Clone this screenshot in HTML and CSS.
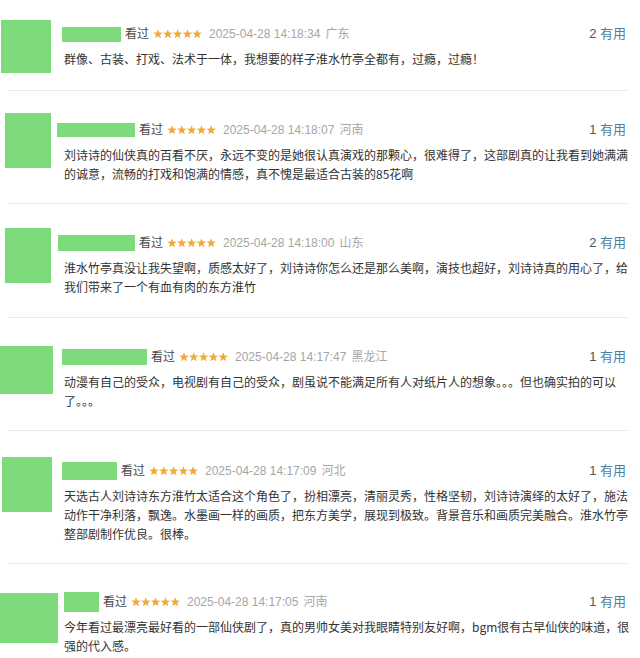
FILE: index.html
```html
<!DOCTYPE html>
<html>
<head>
	<meta charset="utf-8">
	<title>短评</title>
	<link rel="stylesheet" href="styles.css">
</head>
<body>
<svg class="sprite" width="0" height="0">
	<symbol id="s5" viewBox="0 0 49 10">
		<g fill="#f1a937">
			<polygon points="5,0.2 6.23,3.5 9.76,3.66 7,5.85 7.94,9.25 5,7.3 2.06,9.25 3,5.85 0.24,3.66 3.77,3.5"/>
			<polygon transform="translate(9.8 0)" points="5,0.2 6.23,3.5 9.76,3.66 7,5.85 7.94,9.25 5,7.3 2.06,9.25 3,5.85 0.24,3.66 3.77,3.5"/>
			<polygon transform="translate(19.6 0)" points="5,0.2 6.23,3.5 9.76,3.66 7,5.85 7.94,9.25 5,7.3 2.06,9.25 3,5.85 0.24,3.66 3.77,3.5"/>
			<polygon transform="translate(29.4 0)" points="5,0.2 6.23,3.5 9.76,3.66 7,5.85 7.94,9.25 5,7.3 2.06,9.25 3,5.85 0.24,3.66 3.77,3.5"/>
			<polygon transform="translate(39.2 0)" points="5,0.2 6.23,3.5 9.76,3.66 7,5.85 7.94,9.25 5,7.3 2.06,9.25 3,5.85 0.24,3.66 3.77,3.5"/>
		</g>
	</symbol>
</svg>
<ul class="list">
	<li class="item c1">
		<div class="pic"><span class="avatar"></span></div>
		<div class="main">
			<div class="meta">
				<span class="name"></span><span class="watched">看过</span>
				<svg class="stars" width="49" height="10"><use href="#s5"/></svg>
				<span class="time">2025-04-28 14:18:34</span><span class="loc">广东</span>
				<span class="vote">2 <span>有用</span></span>
			</div>
			<p class="content">群像、古装、打戏、法术于一体，我想要的样子淮水竹亭全都有，过瘾，过瘾！</p>
		</div>
	</li>
	<li class="item c2">
		<div class="pic"><span class="avatar"></span></div>
		<div class="main">
			<div class="meta">
				<span class="name"></span><span class="watched">看过</span>
				<svg class="stars" width="49" height="10"><use href="#s5"/></svg>
				<span class="time">2025-04-28 14:18:07</span><span class="loc">河南</span>
				<span class="vote">1 <span>有用</span></span>
			</div>
			<p class="content">刘诗诗的仙侠真的百看不厌，永远不变的是她很认真演戏的那颗心，很难得了，这部剧真的让我看到她满满的诚意，流畅的打戏和饱满的情感，真不愧是最适合古装的85花啊</p>
		</div>
	</li>
	<li class="item c3">
		<div class="pic"><span class="avatar"></span></div>
		<div class="main">
			<div class="meta">
				<span class="name"></span><span class="watched">看过</span>
				<svg class="stars" width="49" height="10"><use href="#s5"/></svg>
				<span class="time">2025-04-28 14:18:00</span><span class="loc">山东</span>
				<span class="vote">2 <span>有用</span></span>
			</div>
			<p class="content">淮水竹亭真没让我失望啊，质感太好了，刘诗诗你怎么还是那么美啊，演技也超好，刘诗诗真的用心了，给我们带来了一个有血有肉的东方淮竹</p>
		</div>
	</li>
	<li class="item c4">
		<div class="pic"><span class="avatar"></span></div>
		<div class="main">
			<div class="meta">
				<span class="name"></span><span class="watched">看过</span>
				<svg class="stars" width="49" height="10"><use href="#s5"/></svg>
				<span class="time">2025-04-28 14:17:47</span><span class="loc">黑龙江</span>
				<span class="vote">1 <span>有用</span></span>
			</div>
			<p class="content">动漫有自己的受众，电视剧有自己的受众，剧虽说不能满足所有人对纸片人的想象。。。但也确实拍的可以了。。。</p>
		</div>
	</li>
	<li class="item c5">
		<div class="pic"><span class="avatar"></span></div>
		<div class="main">
			<div class="meta">
				<span class="name"></span><span class="watched">看过</span>
				<svg class="stars" width="49" height="10"><use href="#s5"/></svg>
				<span class="time">2025-04-28 14:17:09</span><span class="loc">河北</span>
				<span class="vote">1 <span>有用</span></span>
			</div>
			<p class="content">天选古人刘诗诗东方淮竹太适合这个角色了，扮相漂亮，清丽灵秀，性格坚韧，刘诗诗演绎的太好了，施法动作干净利落，飘逸。水墨画一样的画质，把东方美学，展现到极致。背景音乐和画质完美融合。淮水竹亭整部剧制作优良。很棒。</p>
		</div>
	</li>
	<li class="item c6">
		<div class="pic"><span class="avatar"></span></div>
		<div class="main">
			<div class="meta">
				<span class="name"></span><span class="watched">看过</span>
				<svg class="stars" width="49" height="10"><use href="#s5"/></svg>
				<span class="time">2025-04-28 14:17:05</span><span class="loc">河南</span>
				<span class="vote">1 <span>有用</span></span>
			</div>
			<p class="content">今年看过最漂亮最好看的一部仙侠剧了，真的男帅女美对我眼睛特别友好啊，bgm很有古早仙侠的味道，很强的代入感。</p>
		</div>
	</li>
</ul>
</body>
</html>
```
FILE: styles.css
```css
body,ul,li,p{margin:0;padding:0;}
body{background:#fff;color:#333;font:12px/20px "Liberation Sans","Noto Sans CJK SC",sans-serif;overflow:hidden;}
.sprite{position:absolute;}
.list{list-style:none;}
.item{display:flex;margin:0 12px 0 8px;padding:29px 0 20px;border-bottom:1px solid #ebebeb;}
.item:last-child{border-bottom:0;}
.pic{width:49px;flex-shrink:0;}
.avatar{display:block;background:#7ddb7c;}
.main{flex:1;min-width:0;}
.meta{display:flex;align-items:center;height:20px;white-space:nowrap;color:#a6a6a6;}
.name{display:block;background:#7ddb7c;margin-right:4px;}
.watched{color:#494949;margin-right:4px;}
.stars{display:block;margin-right:7px;}
.time{margin-right:5px;}
.vote{margin-left:auto;padding-right:2px;color:#555;font-size:13px;}
.vote span{color:#4f7f9e;}
.content{margin:5px 0 0 7px;width:564px;font-family:"Noto Sans CJK SC","Liberation Sans",sans-serif;line-height:19px;color:#333;}

.c1{padding-top:24px;padding-bottom:17px;}
.c1 .avatar{width:50px;height:53px;margin:-4px 0 0 -7px;}
.c1 .name{width:59px;height:15px;margin-left:5px;}

.c2 .avatar{width:46px;height:55px;margin:-7px 0 0 -3px;}
.c2 .name{width:78px;height:14px;}

.c3{padding-bottom:21px;}
.c3 .avatar{width:46px;height:55px;margin:-5px 0 0 -3px;}
.c3 .name{width:77px;height:16px;margin-left:1px;}

.c4 .avatar{width:53px;height:48px;margin:-1px 0 0 -8px;}
.c4 .name{width:85px;height:16px;margin-left:5px;}

.c5{padding-top:30px;}
.c5 .avatar{width:50px;height:55px;margin:-4px 0 0 -6px;}
.c5 .name{width:55px;height:18px;margin-left:5px;}

.c6{padding-top:28px;}
.c6 .avatar{width:58px;height:50px;margin:1px 0 0 -8px;}
.c6 .name{width:35px;height:20px;margin-left:7px;}
.c6 .content{width:570px;}
```
